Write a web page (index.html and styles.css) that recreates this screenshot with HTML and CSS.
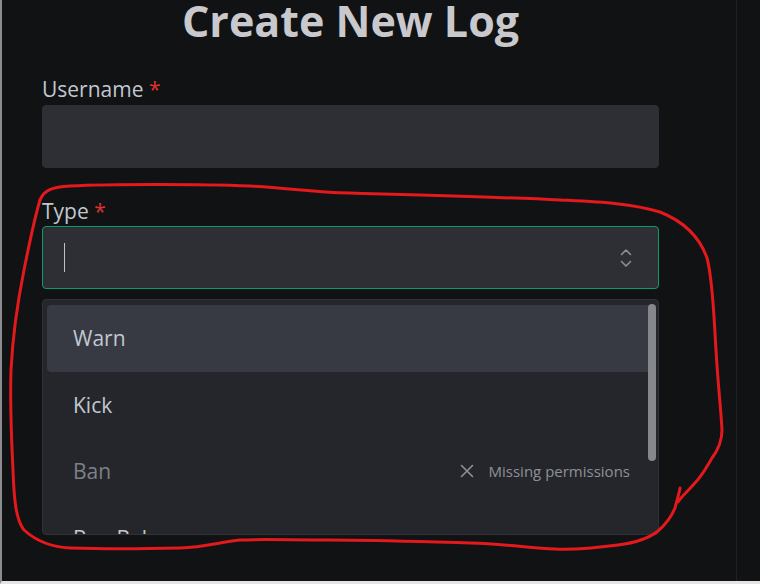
FILE: index.html
```html
<!DOCTYPE html>
<html lang="en">
<head>
    <meta charset="UTF-8">
    <title>Create New Log</title>
    <link rel="stylesheet" href="styles.css">
</head>
<body>
    <div class="frame">
        <main class="form">
            <h1 class="title">Create New Log</h1>

            <div class="field">
                <label class="label">Username <span class="req">*</span></label>
                <div class="input"></div>
            </div>

            <div class="field field-type">
                <label class="label">Type <span class="req">*</span></label>
                <div class="input select is-focused">
                    <span class="caret"></span>
                    <svg class="chevron" width="14" height="22" viewBox="0 0 14 22" fill="none" stroke="currentColor" stroke-width="1.6" stroke-linecap="round" stroke-linejoin="round">
                        <path d="M2.5 7.5 L7 3 L11.5 7.5"/>
                        <path d="M2.5 14.5 L7 19 L11.5 14.5"/>
                    </svg>
                </div>

                <div class="dropdown">
                    <div class="option is-hovered">Warn</div>
                    <div class="option">Kick</div>
                    <div class="option is-disabled">
                        <span>Ban</span>
                        <span class="note">
                            <svg width="14" height="14" viewBox="0 0 14 14" stroke="currentColor" stroke-width="1.6" stroke-linecap="round">
                                <path d="M1.5 1.5 L12.5 12.5 M12.5 1.5 L1.5 12.5"/>
                            </svg>
                            Missing permissions
                        </span>
                    </div>
                    <div class="option">Ban Bal</div>
                    <div class="scrollbar"></div>
                </div>
            </div>
        </main>
        <div class="side"></div>

        <!-- hand drawn marker ring over the screenshot -->
        <svg class="scribble" viewBox="0 0 760 584" fill="none" stroke="#e3191c" stroke-width="3" stroke-linecap="round" stroke-linejoin="round">
            <path d="M40 200 C44 190, 52 187, 70 186 C110 184, 200 184, 250 186 C290 188, 310 192, 350 193 C420 195, 500 197, 560 200 C600 202, 630 203, 660 212 C685 222, 700 238, 707 258 C713 280, 714 320, 716 350 C718 385, 721 410, 722 430 C722 442, 718 450, 712 458 C706 468, 702 476, 694 484 C688 491, 682 496, 678 502"/>
            <path d="M680 488 C679 494, 677 500, 675 508 C671 518, 666 524, 658 531 C648 539, 634 543, 618 545 C595 548, 575 550, 555 549 C530 548, 505 544, 470 543 C430 542, 380 540, 330 540 C290 540, 260 539, 240 540 C220 542, 205 547, 180 548 C140 549, 100 549, 70 548 C50 547, 35 540, 24 530 C16 520, 14 500, 13 470 C11 430, 10 400, 11 370 C13 330, 18 300, 24 270 C30 240, 34 220, 40 200"/>
        </svg>
    </div>
</body>
</html>
```

FILE: styles.css
```css
* {
    box-sizing: border-box;
}
html, body {
    margin: 0;
    height: 100%;
    background-color: #111214;
    overflow: hidden;
}
body {
    font-family: 'Open Sans', 'Noto Sans', sans-serif;
    color: #c1c2c5;
}
.frame {
    position: relative;
    display: flex;
    height: 584px;
    border-left: 2px solid #8c8c8e;
    border-bottom: 3px solid #e4e4e6;
    overflow: hidden;
}
.form {
    width: 617px;
    margin-left: 40px;
}
.title {
    margin: -6px 0 0;
    font-size: 43px;
    font-weight: 700;
    line-height: 54px;
    text-align: center;
    color: #c9c9cd;
}
.field {
    margin-top: 28px;
}
.field-type {
    margin-top: 30px;
}
.label {
    display: block;
    font-size: 21px;
    line-height: 26px;
    margin-bottom: 3px;
    color: #c1c8d0;
}
.field-type .label {
    margin-bottom: 2px;
}
.req {
    color: #e03131;
}
.input {
    height: 63px;
    border-radius: 4px;
    background-color: #2e2f34;
    border: 1px solid #2e2f34;
}
.select {
    display: flex;
    align-items: center;
    justify-content: space-between;
    padding: 0 25px 0 21px;
}
.select.is-focused {
    border-color: #0f9a6c;
}
.caret {
    width: 1px;
    height: 29px;
    background-color: #c1c2c5;
}
.chevron {
    color: #8e9096;
}
.dropdown {
    position: relative;
    margin-top: 10px;
    height: 236px;
    padding: 5px 4px 4px;
    border: 1px solid #2f3136;
    border-radius: 4px;
    background-color: #25262b;
    overflow: hidden;
}
.option {
    display: flex;
    align-items: center;
    justify-content: space-between;
    flex-shrink: 0;
    height: 66.5px;
    padding: 0 24px 0 26px;
    border-radius: 4px;
    font-size: 21px;
    color: #c1c8d0;
}
.option.is-hovered {
    background-color: #373a42;
}
.option.is-disabled {
    color: #7d8087;
}
.note {
    display: flex;
    align-items: center;
    gap: 15px;
    font-size: 15px;
    color: #8e9197;
}
.scrollbar {
    position: absolute;
    top: 4px;
    right: 2px;
    width: 8px;
    height: 157px;
    border-radius: 4px;
    background-color: #85878c;
}
.side {
    width: 1px;
    margin-left: 77px;
    background-color: #1f2125;
}
.scribble {
    position: absolute;
    top: 0;
    left: -2px;
    width: 760px;
    height: 584px;
    pointer-events: none;
}
```
